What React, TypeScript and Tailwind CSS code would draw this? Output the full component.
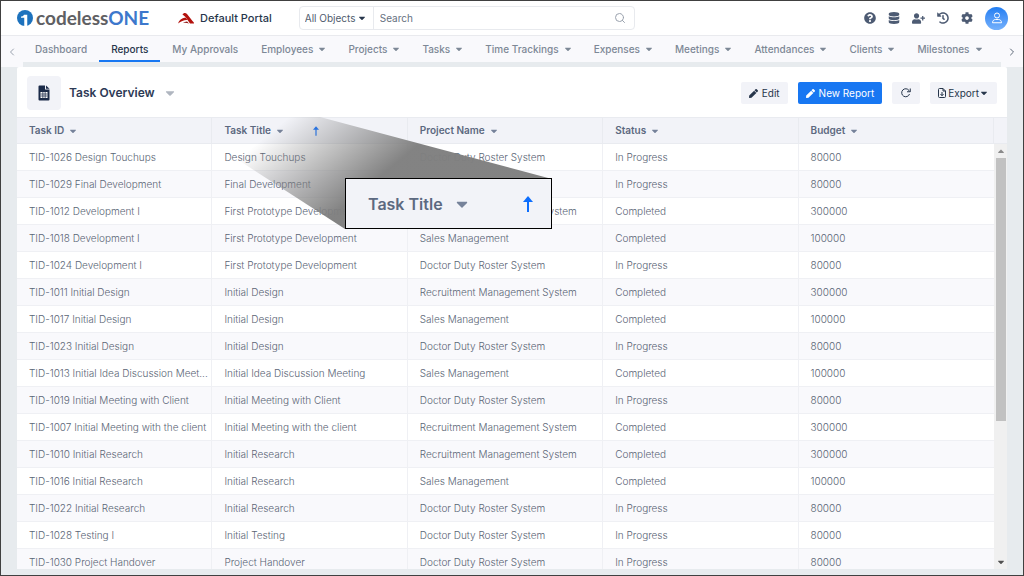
import type { ReactNode } from "react";
import {
  FaCaretDown,
  FaCaretUp,
  FaCog,
  FaDatabase,
  FaHistory,
  FaPen,
  FaQuestionCircle,
  FaUserPlus,
} from "react-icons/fa";
import { FiSearch } from "react-icons/fi";
import { LuChevronLeft, LuChevronRight } from "react-icons/lu";

const navItems = [
  { label: "Dashboard" },
  { label: "Reports", active: true },
  { label: "My Approvals" },
  { label: "Employees", menu: true },
  { label: "Projects", menu: true },
  { label: "Tasks", menu: true },
  { label: "Time Trackings", menu: true },
  { label: "Expenses", menu: true },
  { label: "Meetings", menu: true },
  { label: "Attendances", menu: true },
  { label: "Clients", menu: true },
  { label: "Milestones", menu: true },
];

const columns = ["Task ID", "Task Title", "Project Name", "Status", "Budget"];

const ROSTER = "Doctor Duty Roster System";
const RECRUIT = "Recruitment Management System";
const SALES = "Sales Management";

const rows = [
  ["TID-1026 Design Touchups", "Design Touchups", ROSTER, "In Progress", "80000"],
  ["TID-1029 Final Development", "Final Development", ROSTER, "In Progress", "80000"],
  ["TID-1012 Development I", "First Prototype Development", RECRUIT, "Completed", "300000"],
  ["TID-1018 Development I", "First Prototype Development", SALES, "Completed", "100000"],
  ["TID-1024 Development I", "First Prototype Development", ROSTER, "In Progress", "80000"],
  ["TID-1011 Initial Design", "Initial Design", RECRUIT, "Completed", "300000"],
  ["TID-1017 Initial Design", "Initial Design", SALES, "Completed", "100000"],
  ["TID-1023 Initial Design", "Initial Design", ROSTER, "In Progress", "80000"],
  ["TID-1013 Initial Idea Discussion Meet...", "Initial Idea Discussion Meeting", SALES, "Completed", "100000"],
  ["TID-1019 Initial Meeting with Client", "Initial Meeting with Client", ROSTER, "In Progress", "80000"],
  ["TID-1007 Initial Meeting with the client", "Initial Meeting with the client", RECRUIT, "Completed", "300000"],
  ["TID-1010 Initial Research", "Initial Research", RECRUIT, "Completed", "300000"],
  ["TID-1016 Initial Research", "Initial Research", SALES, "Completed", "100000"],
  ["TID-1022 Initial Research", "Initial Research", ROSTER, "In Progress", "80000"],
  ["TID-1028 Testing I", "Initial Testing", ROSTER, "In Progress", "80000"],
  ["TID-1030 Project Handover", "Project Handover", ROSTER, "In Progress", "80000"],
];

function SortArrow({ className }: { className: string }) {
  return (
    <svg className={className} viewBox="0 0 10 16" fill="none">
      <path d="M5 4v12" stroke="#0d6efd" strokeWidth="2" />
      <path d="M5 0 10 6H0z" fill="#0d6efd" />
    </svg>
  );
}

function Logo() {
  return (
    <a href="#" aria-label="codelessONE" className="flex w-[161px] items-center gap-[3px]">
      <svg className="size-4 shrink-0" viewBox="0 0 32 32">
        <path d="M16 0a16 16 0 1 0 0 32 16 16 0 0 0 0-32z" fill="#1d72bd" />
        <path d="M8 13c3 0 5-1 6-3.500H20.500V32H14.500V15.500H8z" fill="#fff" />
      </svg>
      <span className="font-[Lato,sans-serif] text-[19px] leading-5 font-bold text-[#5f6063]">
        codeless<span className="text-[#3d78cc]">ONE</span>
      </span>
    </a>
  );
}

function TopBar() {
  return (
    <header className="flex h-[35px] shrink-0 items-center border-b border-[#e9eaee] bg-white pr-[15px] pl-4">
      <Logo />
      <svg className="h-[11px] w-4 shrink-0" viewBox="0 0 32 22">
        <path d="M9 3c2-3 6-4 9-1l11 14c2 2 3 3 3 5h-8L15 8z" fill="#b3120d" />
        <path d="M0 21c2-7 7-11 15-12l4 5c-7-.5-12 2-19 7z" fill="#b3120d" />
        <path d="M9 20c3-2 6-3 9-3l4 4c-4-1.500-8-1.700-13-1z" fill="#8d0f0b" />
      </svg>
      <span className="ml-1.5 text-[11px] font-medium whitespace-nowrap text-[#27364b]">Default Portal</span>

      <div className="ml-[27px] flex h-6 w-1/3 min-w-[336px] items-center rounded-sm border border-[#e8eaee]">
        <label className="relative flex h-full w-[74px] items-center border-r border-[#e8eaee]">
          <select aria-label="Object type" className="w-full appearance-none bg-transparent pl-[5px] text-[10px] text-[#4f5c6e] outline-none">
            <option>All Objects</option>
          </select>
          <FaCaretDown className="pointer-events-none absolute right-1.5 size-2.5 text-[#27364b]" />
        </label>
        <input
          type="search"
          aria-label="Search"
          placeholder="Search"
          className="min-w-0 flex-1 px-1.5 text-[10px] outline-none placeholder:text-[#66717f]"
        />
        <FiSearch className="mr-2 size-3 text-[#9aa2ae]" />
      </div>

      <div className="ml-auto flex items-center gap-3 text-[#4d5b73]">
        <button aria-label="Help"><FaQuestionCircle className="size-3" /></button>
        <button aria-label="Data"><FaDatabase className="size-3" /></button>
        <button aria-label="Invite user"><FaUserPlus className="size-[13px]" /></button>
        <button aria-label="History"><FaHistory className="size-3" /></button>
        <button aria-label="Settings"><FaCog className="size-3" /></button>
        <button
          aria-label="Profile"
          className="grid size-[23px] place-items-center rounded-full bg-linear-to-b from-[#1f7df2] to-[#75b1fb]"
        >
          <svg className="size-3" viewBox="0 0 24 24" fill="none" stroke="#fff" strokeWidth="2">
            <circle cx="12" cy="7" r="5" />
            <path d="M3 21.500c0-4 2.500-6.500 6-6.500h6c3.500 0 6 2.500 6 6.500z" />
          </svg>
        </button>
      </div>
    </header>
  );
}

function NavBar() {
  return (
    <nav className="flex h-[31px] shrink-0 bg-[#f9f9fc]">
      <button aria-label="Previous" className="grid w-[22px] shrink-0 place-items-center text-[#9aa2ae]">
        <LuChevronLeft className="size-3" />
      </button>
      <ul className="flex min-w-0 flex-1 border-b-[5px] border-[#e7ebee]">
        {navItems.map((item) => (
          <li key={item.label}>
            <a
              href="#"
              className={`flex h-full items-center gap-1 border-b-2 pt-0.5 text-[10px] font-medium whitespace-nowrap ${
                item.menu ? "pr-2.5 pl-[11px]" : "px-3"
              } ${
                item.active ? "border-[#1877f2] text-[#27364b]" : "border-transparent text-[#7d8896]"
              }`}
            >
              {item.label}
              {item.menu && <FaCaretDown className="size-2.5" />}
            </a>
          </li>
        ))}
      </ul>
      <button aria-label="Next" className="grid w-[22px] shrink-0 place-items-center text-[#5d6878]">
        <LuChevronRight className="size-3" />
      </button>
    </nav>
  );
}

function ToolButton({ children, primary, label }: { children: ReactNode; primary?: boolean; label?: string }) {
  return (
    <button
      aria-label={label}
      className={`flex h-[22px] items-center gap-1 rounded-xs px-2 text-[10px] ${
        primary ? "bg-[#1877f2] text-white" : "bg-[#f2f3f8] text-[#27364b]"
      }`}
    >
      {children}
    </button>
  );
}

function ReportHeader() {
  return (
    <div className="flex h-[50px] shrink-0 items-center gap-2 px-2.5 pt-0.5">
      <div className="grid size-[34px] place-items-center rounded bg-[#f2f3f8]">
        <svg className="h-4 w-3" viewBox="0 0 24 32">
          <path d="M3 1h11v8h9v20a2 2 0 0 1-2 2H3a2 2 0 0 1-2-2V3a2 2 0 0 1 2-2z" fill="#1b2a49" />
          <path d="M16 1l7 6.500h-7z" fill="#1b2a49" />
          <path d="M5 14h14v12H5z" fill="#fff" />
          <path d="M5 18h14M5 22h14M9.700 14v12M14.300 14v12" stroke="#1b2a49" strokeWidth="1.500" />
        </svg>
      </div>
      <h1 className="text-xs font-semibold text-[#2d3a55]">Task Overview</h1>
      <FaCaretDown className="size-3.5 text-[#b0b6c0]" />
      <div className="ml-auto flex gap-2.5">
        <ToolButton><FaPen className="size-[9px]" /> Edit</ToolButton>
        <ToolButton primary><FaPen className="size-[9px]" /> New Report</ToolButton>
        <ToolButton label="Refresh">
          <svg className="mx-px size-2.5" viewBox="0 0 20 20" fill="none" stroke="currentColor" strokeWidth="2">
            <path d="M17 12a8 8 0 1 1-1-7l2 2" />
            <path d="M18.500 1v6.500H12" />
          </svg>
        </ToolButton>
        <ToolButton>
          <svg className="-mr-0.5 h-2.5 w-2" viewBox="0 0 16 20" fill="none" stroke="currentColor" strokeWidth="2">
            <path d="M10 1H3a2 2 0 0 0-2 2v14a2 2 0 0 0 2 2h10a2 2 0 0 0 2-2V6l-5-5v5h5" />
            <path d="M8 8v7M5 12l3 3.500 3-3.500" />
          </svg>
          Export
          <FaCaretDown className="-ml-1 size-2.5" />
        </ToolButton>
      </div>
    </div>
  );
}

function ReportTable() {
  return (
    <div className="flex min-h-0 flex-1 overflow-hidden">
      <table className="w-full flex-1 table-fixed border-separate border-spacing-0 text-left text-[#5a6575]">
        <thead>
          <tr className="h-[27px] bg-[#f2f3f8]">
            {columns.map((name) => (
              <th key={name} scope="col" className="border-y border-r border-[#e9ebf0] px-3 text-[10px] font-semibold text-[#5c6980]">
                <span className="flex items-center gap-1">
                  {name}
                  <FaCaretDown className="size-2.5 text-[#76829a]" />
                  {name === "Task Title" && <SortArrow className="ml-6 h-2.5 w-1.5" />}
                </span>
              </th>
            ))}
          </tr>
        </thead>
        <tbody>
          {rows.map((row) => (
            <tr key={row[0]} className="h-[27px] even:bg-[#f9f9fc]">
              {row.map((cell, i) => (
                <td key={i} className="truncate border-r border-b border-[#eff0f4] pr-0.5 pl-3 text-[10px] font-light last:border-r-0">
                  {cell}
                </td>
              ))}
            </tr>
          ))}
        </tbody>
      </table>
      <div className="flex w-[13px] shrink-0 flex-col items-center bg-[#f0f0f0]">
        <div className="h-[27px] w-full shrink-0 border-y border-[#e9ebf0] bg-[#f2f3f8]" />
        <FaCaretUp className="my-0.5 size-2.5 shrink-0 text-[#8a8a8a]" />
        <div className="h-[263px] w-2.5 bg-[#c1c1c1]" />
        <FaCaretDown className="mt-auto mb-0.5 size-2.5 shrink-0 text-[#505050]" />
      </div>
    </div>
  );
}

// Enlarged view of the sorted column heading, with a shaded beam leading to it
function HeaderCallout() {
  return (
    <div className="pointer-events-none absolute top-[116px] left-[211px] h-28 w-[340px]">
      <svg className="absolute inset-0 size-full" viewBox="0 0 340 112">
        <defs>
          <linearGradient id="beam" gradientUnits="userSpaceOnUse" x1="70" y1="6" x2="136" y2="86">
            <stop offset="0" stopColor="#7f7f7f" stopOpacity="0" />
            <stop offset="1" stopColor="#7f7f7f" stopOpacity="0.97" />
          </linearGradient>
        </defs>
        <path d="M0 26 0 0H108L340 62 133 112z" fill="url(#beam)" />
      </svg>
      <div className="absolute right-0 bottom-0 flex h-[51px] w-[207px] items-center border border-black bg-[#f2f3f8] px-[22px] text-base font-semibold text-[#5c6980]">
        Task Title
        <FaCaretDown className="ml-2.5 size-[18px] text-[#76829a]" />
        <SortArrow className="ml-auto -mr-1 h-4 w-2.5" />
      </div>
    </div>
  );
}

export default function App() {
  return (
    <div className="relative flex h-screen flex-col border border-[#404040] bg-[#e7ebee] font-[Inter,sans-serif]">
      <TopBar />
      <NavBar />
      <main className="mx-4 mb-1.5 flex min-h-0 flex-1 flex-col rounded-t-xs bg-white">
        <ReportHeader />
        <ReportTable />
      </main>
      <HeaderCallout />
    </div>
  );
}
